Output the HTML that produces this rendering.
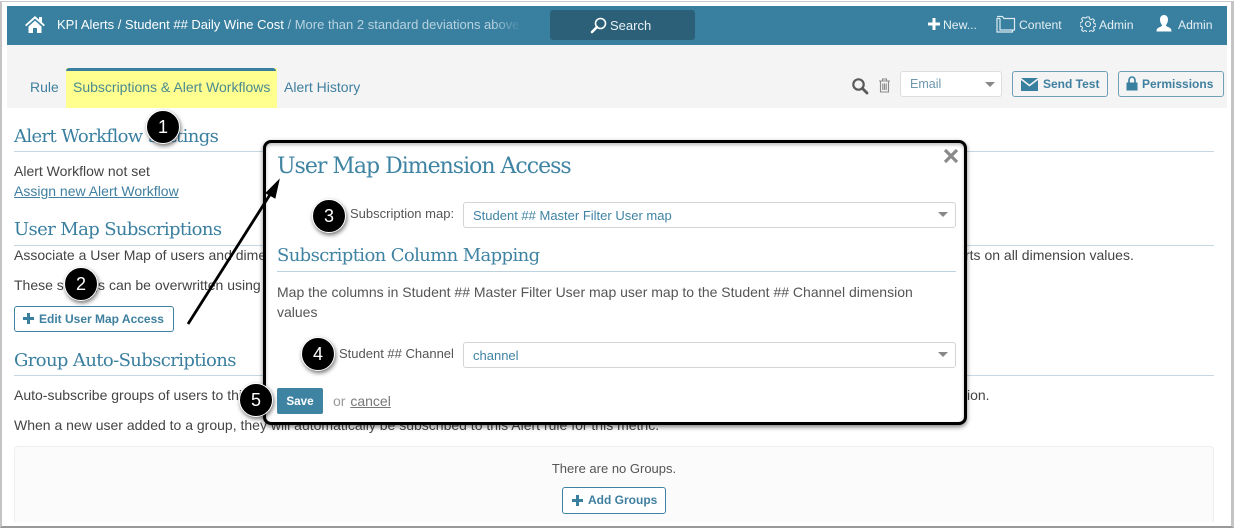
<!DOCTYPE html>
<html><head><meta charset="utf-8"><style>
html,body{margin:0;padding:0;background:#fff}
body{width:1234px;height:530px;position:relative;overflow:hidden;font-family:"Liberation Sans",sans-serif;font-size:14px;color:#444}
.a{position:absolute;white-space:nowrap}
.h{font-family:"DejaVu Serif",serif;color:#3a7fa0;font-size:18px;line-height:24px;letter-spacing:-.62px}
.r{position:absolute;height:1px;background:#c5d7e2}
.t{line-height:18px}
.nav{font-size:12.200px;line-height:16px;color:#e6f0f4;top:17px}
.btn{position:absolute;box-sizing:border-box;border:1px solid #3f83a3;border-radius:3px;color:#3f7f9f;font-weight:bold;font-size:12px;line-height:24px;white-space:nowrap;background:#fff}
.sel{position:absolute;box-sizing:border-box;background:#fff;border:1px solid #d4d4d4;border-radius:3px;color:#3f83a3;font-size:13px;white-space:nowrap}
.tri{position:absolute;width:0;height:0;border-left:5px solid transparent;border-right:5px solid transparent;border-top:5px solid #888}
.c{position:absolute;width:32px;height:32px;border-radius:50%;background:#000;color:#fff;border:1px solid #fff;box-shadow:1px 2px 4px rgba(0,0,0,.55);text-align:center;font-size:18px;line-height:32px;z-index:9}
</style></head><body>
<div class="a" style="left:0;top:1px;width:1234px;height:527px;box-sizing:border-box;border:1px solid #c9c9c9;border-left:2px solid #c4c4c4;border-right:3px solid #c4c4c4;border-bottom:2px solid #999"></div>

<div class="a" style="left:7px;top:6px;width:1220px;height:39px;background:#387fa0"></div>
<div class="a" style="left:7px;top:45px;width:1220px;height:63px;background:#f4f4f4"></div>

<svg class="a" style="left:24px;top:15px" width="22" height="19" viewBox="0 0 22 19"><path d="M11 1L1 10l1.300 1.300L11 3.600l8.700 7.700L21 10l-3-2.700V2h-3v2.600z" fill="#fff"/><path d="M4.500 11.500L11 5.600l6.500 5.900V18h-4.500v-5H9v5H4.500z" fill="#fff"/></svg>
<div class="a" style="left:57px;top:17px;font-size:13px;line-height:16px;color:#fff;width:463px;overflow:hidden">KPI Alerts / Student ## Daily Wine Cost <span style="color:#b9d3df">/ More than 2 standard deviations above</span></div>
<div class="a" style="left:492px;top:10px;width:30px;height:30px;background:linear-gradient(90deg,rgba(56,127,160,0),#387fa0)"></div>

<div class="a" style="left:550px;top:10px;width:145px;height:30px;background:#2b6078;border-radius:3px"></div>
<svg class="a" style="left:590px;top:17px" width="18" height="17" viewBox="0 0 18 17"><circle cx="10.500" cy="6.500" r="5" fill="none" stroke="#fff" stroke-width="1.600"/><path d="M7 10L2 15" stroke="#fff" stroke-width="2.600" stroke-linecap="round"/></svg>
<div class="a" style="left:610px;top:18px;font-size:13px;line-height:16px;color:#e8f1f5">Search</div>

<svg class="a" style="left:928px;top:18px" width="12" height="12" viewBox="0 0 12 12"><path d="M4.500 0h3v4.500H12v3H7.500V12h-3V7.500H0v-3h4.500z" fill="#fff"/></svg>
<div class="a nav" style="left:943px">New...</div>
<svg class="a" style="left:996px;top:15px" width="20" height="18" viewBox="0 0 20 18"><path d="M4 3.500H1v13.500h15.500V15M1 1.500h5.500l1.500 2h10.500V15H4V3.500" fill="none" stroke="#dceaf0" stroke-width="1.200"/></svg>
<div class="a nav" style="left:1019px">Content</div>
<svg class="a" style="left:1080px;top:16px" width="16" height="16" viewBox="0 0 16 16"><circle cx="8" cy="8" r="2.500" fill="none" stroke="#e6f0f4" stroke-width="1.100"/><path d="M6.800 1h2.400l.4 2 1.500.7 1.800-1 1.600 1.700-1.100 1.700.6 1.500 2 .4v2.300l-2 .4-.6 1.500 1.100 1.700-1.600 1.600-1.800-1-1.500.6-.4 2H6.800l-.4-2-1.500-.6-1.800 1-1.600-1.600 1.100-1.700-.6-1.500-2-.4V6.500l2-.4.600-1.500-1.100-1.700 1.600-1.700 1.800 1 1.500-.7z" fill="none" stroke="#e6f0f4" stroke-width="1"/></svg>
<div class="a nav" style="left:1099px">Admin</div>
<svg class="a" style="left:1156px;top:15px" width="16" height="17" viewBox="0 0 16 17"><path d="M8 0c2.500 0 4 2 4 4.500S10.800 9 10 10c0 1 .6 1.400 2 2 2 .8 3.500 1.400 3.500 4.500H.500C.500 13.400 2 12.800 4 12c1.400-.6 2-1 2-2C5.200 9 4 7 4 4.500S5.500 0 8 0z" fill="#fff"/></svg>
<div class="a nav" style="left:1178px">Admin</div>

<div class="a" style="left:30px;top:78px;font-size:14px;line-height:18px;color:#3f7f9f">Rule</div>
<div class="a" style="left:66px;top:68px;width:211px;height:40px;background:#ffff8f"></div>
<div class="a" style="left:66px;top:68px;width:210px;height:3px;background:#387fa0;border-radius:3px 3px 0 0"></div>
<div class="a" style="left:73px;top:78px;font-size:14px;line-height:18px;color:#4a8a90">Subscriptions &amp; Alert Workflows</div>
<div class="a" style="left:284px;top:78px;font-size:14px;line-height:18px;color:#3f7f9f">Alert History</div>

<svg class="a" style="left:851px;top:77px" width="18" height="18" viewBox="0 0 18 18"><circle cx="7.500" cy="7.500" r="5.200" fill="none" stroke="#5a5a5a" stroke-width="2.200"/><path d="M11.500 11.500L16 16" stroke="#5a5a5a" stroke-width="2.800" stroke-linecap="round"/></svg>
<svg class="a" style="left:878px;top:78px" width="13" height="15" viewBox="0 0 13 15"><path d="M1 3h11M4.500 3V1h4v2M2.500 3v11h8V3M4.800 5.500v6.500M6.500 5.500v6.500M8.200 5.500v6.500" fill="none" stroke="#8a8a8a" stroke-width="1.100"/></svg>
<div class="sel" style="left:900px;top:71px;width:102px;height:26px;border-color:#ddd;color:#6d96ad;font-size:12.500px;line-height:24px;padding-left:9px">Email<span class="tri" style="left:84px;top:10px"></span></div>
<div class="btn" style="left:1012px;top:71px;width:96px;height:26px;border-color:#6fa0b8;background:#f4f4f4;padding-left:30px">Send Test
<svg class="a" style="left:8px;top:6px" width="17" height="13" viewBox="0 0 17 13"><path d="M0 0h17L8.500 6.500z" fill="#387fa0"/><path d="M0 2l8.500 6.500L17 2v11H0z" fill="#387fa0"/></svg></div>
<div class="btn" style="left:1118px;top:71px;width:106px;height:26px;border-color:#6fa0b8;background:#f4f4f4;padding-left:23px">Permissions
<svg class="a" style="left:7px;top:4px" width="12" height="15" viewBox="0 0 12 15"><path d="M3 7V4a3 3 0 0 1 6 0v3" fill="none" stroke="#387fa0" stroke-width="1.600"/><rect x="0.500" y="6.500" width="11" height="8" fill="#387fa0"/></svg></div>

<div class="a h" style="left:14px;top:125px">Alert Workflow Settings</div>
<div class="r" style="left:14px;top:151px;width:1200px"></div>
<div class="a t" style="left:14px;top:162px">Alert Workflow not set</div>
<div class="a t" style="left:14px;top:182px;color:#3f7f9f;text-decoration:underline">Assign new Alert Workflow</div>
<div class="a h" style="left:14px;top:218px">User Map Subscriptions</div>
<div class="r" style="left:14px;top:245px;width:1200px"></div>
<div class="a t" style="left:14px;top:246px">Associate a User Map of users and dimension values to this Alert rule.</div>
<div class="a t" style="left:965px;top:246px">rts on all dimension values.</div>
<div class="a t" style="left:14px;top:276px">These settings can be overwritten using</div>
<div class="btn" style="left:14px;top:306px;width:160px;height:26px;padding-left:24px">Edit User Map Access
<svg class="a" style="left:8px;top:6px" width="11" height="11" viewBox="0 0 11 11"><path d="M4 0h3v4h4v3H7v4H4V7H0V4h4z" fill="#387fa0"/></svg></div>
<div class="a h" style="left:14px;top:349px">Group Auto-Subscriptions</div>
<div class="r" style="left:14px;top:375px;width:1200px"></div>
<div class="a t" style="left:14px;top:386px">Auto-subscribe groups of users to this</div>
<div class="a t" style="left:967px;top:386px">ion.</div>
<div class="a t" style="left:14px;top:416px">When a new user added to a group, they will automatically be subscribed to this Alert rule for this metric.</div>
<div class="a" style="left:14px;top:446px;width:1200px;height:76px;box-sizing:border-box;background:#fbfbfb;border:1px solid #eee;border-bottom:0;border-radius:4px 4px 0 0"></div>
<div class="a" style="left:0;top:460px;width:1214px;text-align:center;font-size:13px;line-height:18px;color:#555;padding-left:14px;box-sizing:border-box">There are no Groups.</div>
<div class="btn" style="left:562px;top:487px;width:104px;height:27px;line-height:25px;padding-left:25px">Add Groups
<svg class="a" style="left:9px;top:7px" width="11" height="11" viewBox="0 0 11 11"><path d="M4 0h3v4h4v3H7v4H4V7H0V4h4z" fill="#387fa0"/></svg></div>

<div class="a" style="left:263px;top:140px;width:704px;height:285px;box-sizing:border-box;background:#fff;border:3px solid #000;border-radius:8px;box-shadow:0 2px 5px rgba(0,0,0,.5),inset 0 2px 3px rgba(0,0,0,.25)"></div>
<div class="a h" style="left:277px;top:153px;font-size:22px;line-height:28px;letter-spacing:-1px;color:#3f83a3">User Map Dimension Access</div>
<svg class="a" style="left:943px;top:148px" width="16" height="16" viewBox="0 0 16 16"><path d="M2 2l12 12M14 2L2 14" stroke="#8a8a8a" stroke-width="3.200"/></svg>
<div class="a" style="left:350px;top:206px;font-size:13px;line-height:16px;color:#555">Subscription map:</div>
<div class="sel" style="left:463px;top:202px;width:493px;height:26px;line-height:25px;padding-left:9px">Student ## Master Filter User map<span class="tri" style="left:474px;top:9px"></span></div>
<div class="a h" style="left:277px;top:244px;color:#3f83a3">Subscription Column Mapping</div>
<div class="r" style="left:277px;top:271px;width:679px;background:#bdd2df"></div>
<div class="a" style="left:277px;top:282px;width:660px;white-space:normal;font-size:14px;line-height:20px;color:#555">Map the columns in Student ## Master Filter User map user map to the Student ## Channel dimension values</div>
<div class="a" style="left:339px;top:346px;font-size:13px;line-height:16px;color:#555">Student ## Channel</div>
<div class="sel" style="left:463px;top:342px;width:493px;height:26px;line-height:25px;padding-left:9px">channel<span class="tri" style="left:474px;top:9px"></span></div>
<div class="a" style="left:277px;top:388px;width:46px;height:26px;background:#3f83a3;border-radius:2px;color:#fff;font-weight:bold;font-size:11.700px;line-height:28px;text-align:center">Save</div>
<div class="a" style="left:333px;top:392px;font-size:14px;line-height:18px;color:#999">or <span style="color:#777;text-decoration:underline;margin-left:1px">cancel</span></div>

<svg class="a" style="left:180px;top:170px;z-index:8" width="110" height="160" viewBox="0 0 110 160"><path d="M8 154L91 23" stroke="#000" stroke-width="2.800"/><path d="M99 10L86 23 95 28z" fill="#000" stroke="#000"/></svg>

<div class="c" style="left:146px;top:110px">1</div>
<div class="c" style="left:64px;top:267px">2</div>
<div class="c" style="left:312px;top:199px">3</div>
<div class="c" style="left:301px;top:337px">4</div>
<div class="c" style="left:239px;top:383px">5</div>
</body></html>
